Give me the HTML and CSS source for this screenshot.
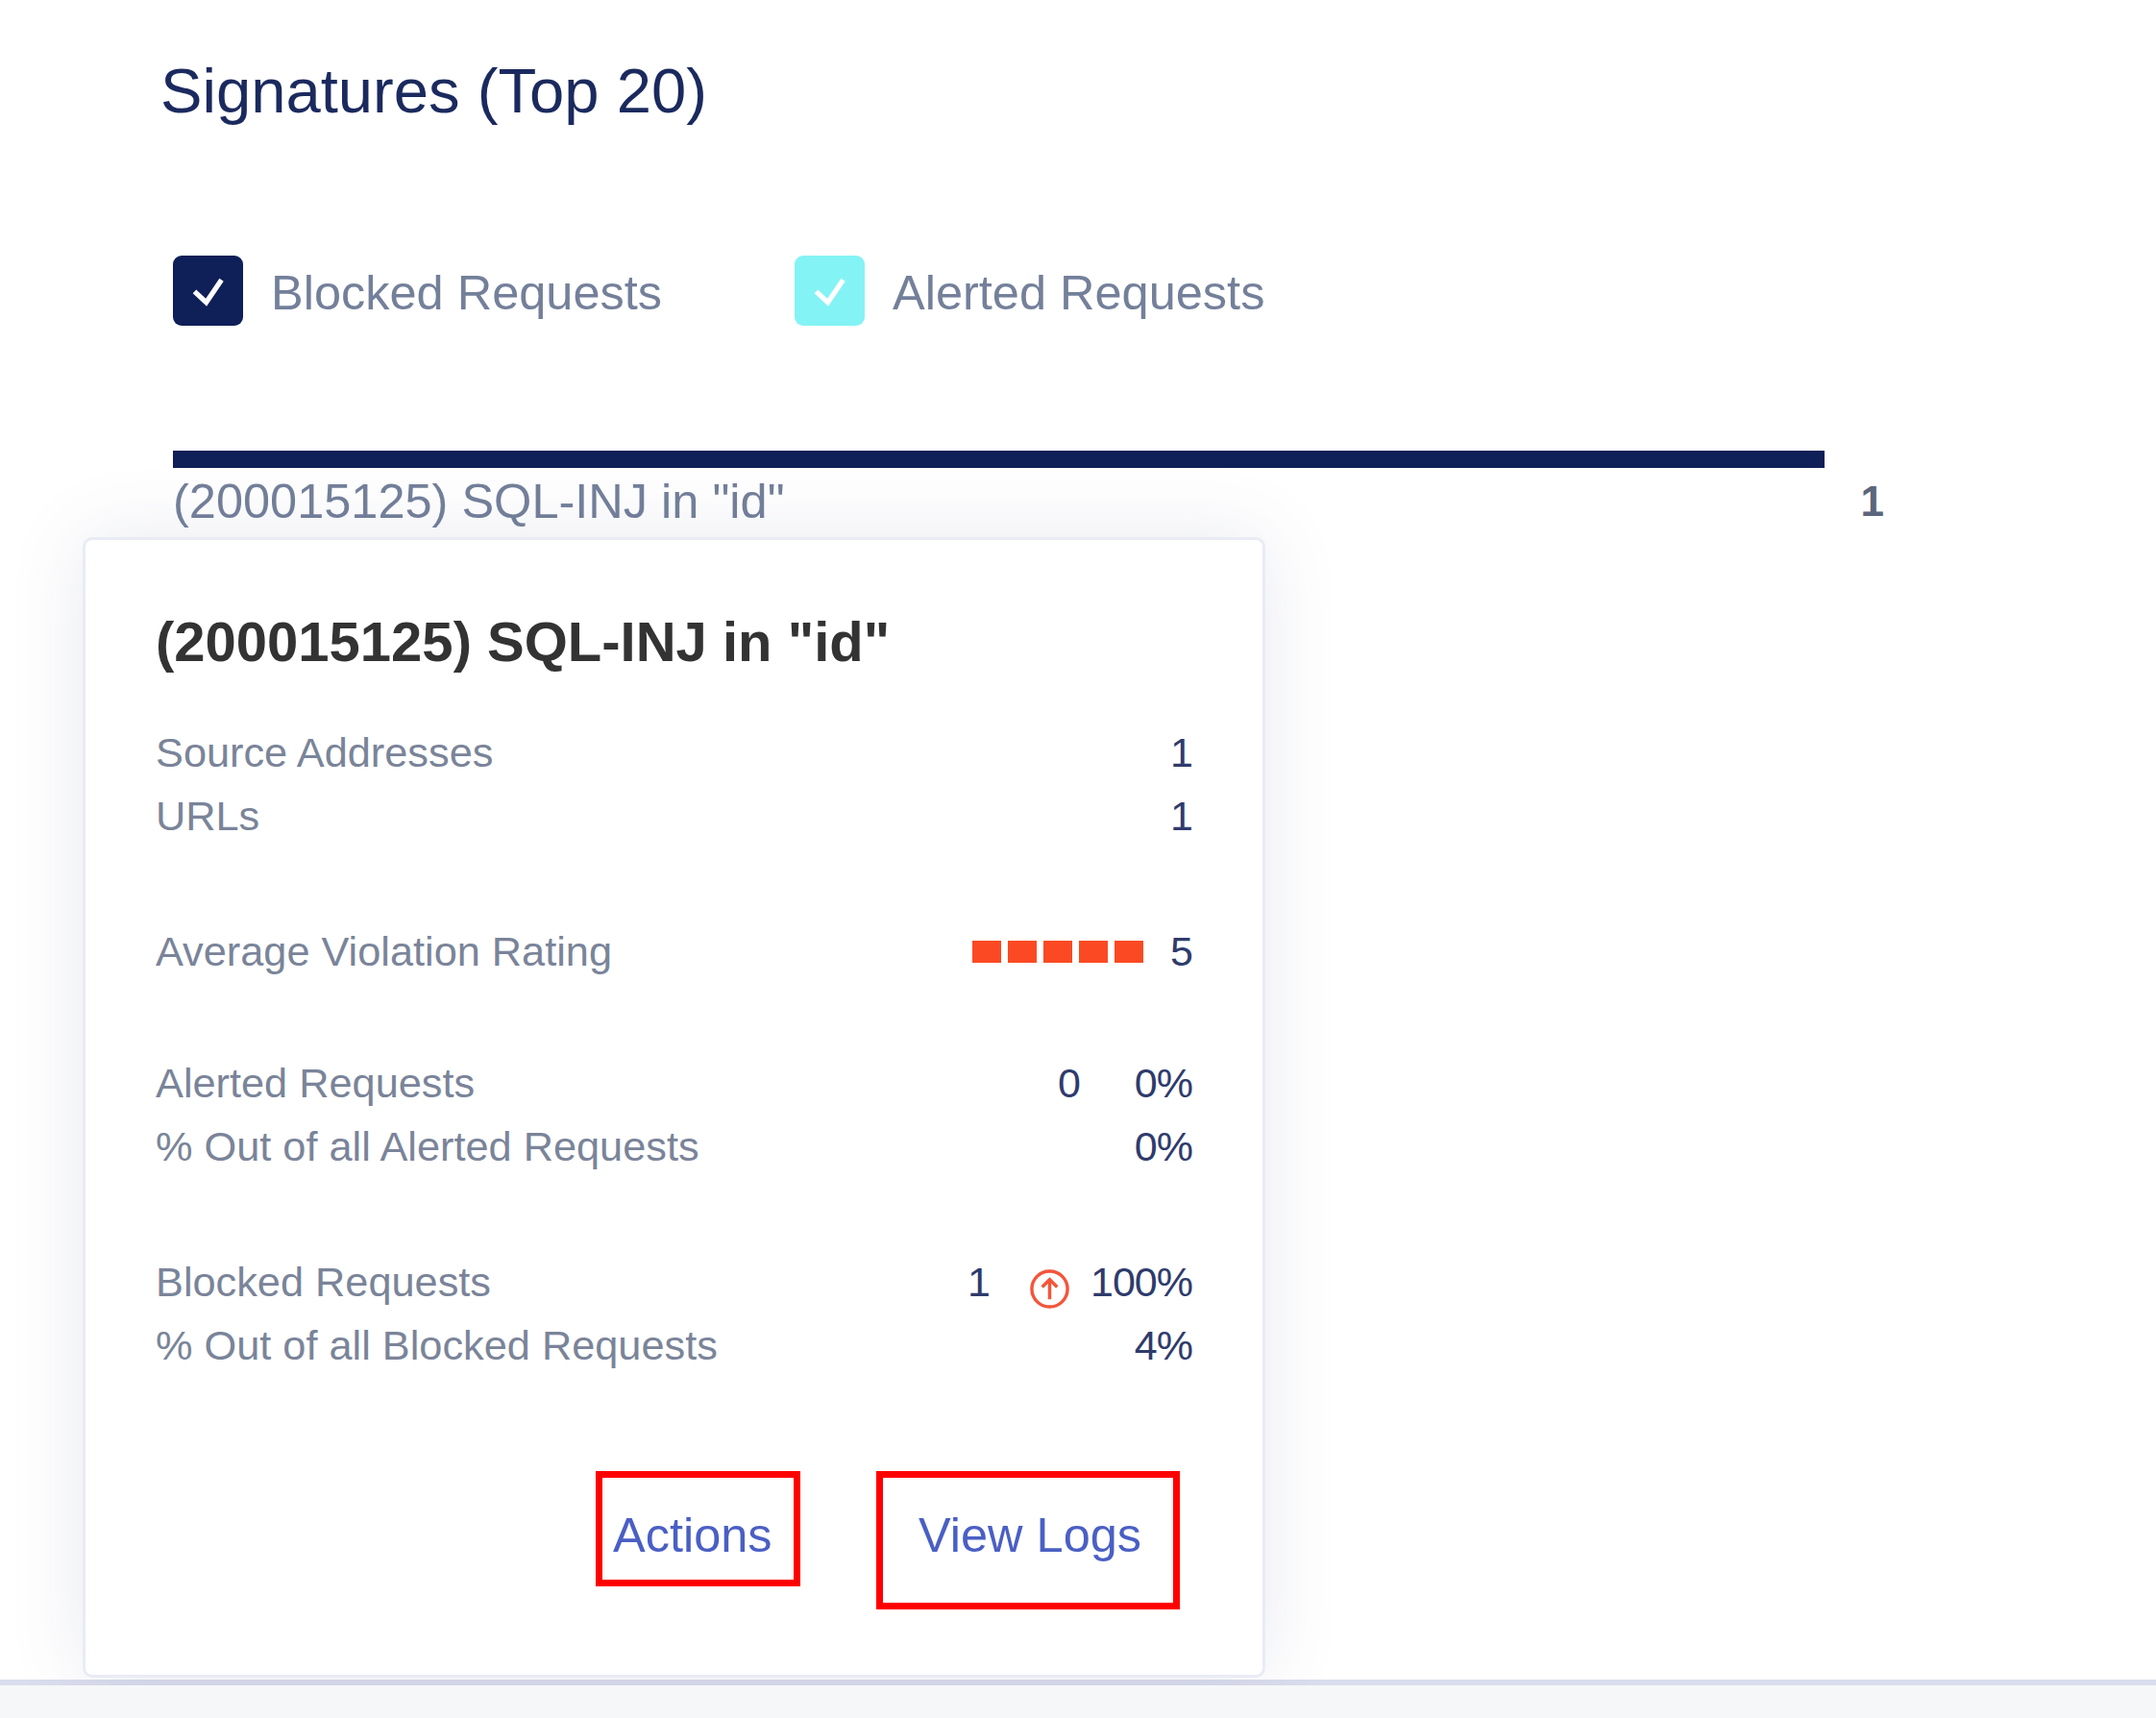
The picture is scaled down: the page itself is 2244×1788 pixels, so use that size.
FILE: index.html
```html
<!DOCTYPE html>
<html lang="en">
<head>
    <meta charset="UTF-8">
    <title>Signatures (Top 20)</title>
    <link rel="stylesheet" href="styles.css">
</head>
<body>
    <main class="panel">
        <h2 class="panel-title">Signatures (Top 20)</h2>

        <div class="legend">
            <label class="legend-item">
                <span class="check check-blocked">
                    <svg viewBox="0 0 24 24"><path d="M4.5 12.5l6.5 6 8.500-12.500"/></svg>
                </span>
                <span class="legend-text">Blocked Requests</span>
            </label>
            <label class="legend-item">
                <span class="check check-alerted">
                    <svg viewBox="0 0 24 24"><path d="M4.5 12.5l6.500 6 8.500-12.500"/></svg>
                </span>
                <span class="legend-text">Alerted Requests</span>
            </label>
        </div>

        <div class="chart">
            <div class="bar"></div>
            <div class="chart-row">
                <span class="chart-label">(200015125) SQL-INJ in "id"</span>
                <span class="chart-value">1</span>
            </div>
        </div>

        <!-- tooltip shown when hovering the bar -->
        <section class="tooltip">
            <h3 class="tooltip-title">(200015125) SQL-INJ in "id"</h3>

            <div class="group">
                <div class="row"><span class="label">Source Addresses</span><span class="value">1</span></div>
                <div class="row"><span class="label">URLs</span><span class="value">1</span></div>
            </div>

            <div class="group group-rating">
                <div class="row">
                    <span class="label">Average Violation Rating</span>
                    <span class="values">
                        <span class="rating"><i></i><i></i><i></i><i></i><i></i></span>
                        <span class="value">5</span>
                    </span>
                </div>
            </div>

            <div class="group">
                <div class="row">
                    <span class="label">Alerted Requests</span>
                    <span class="values">
                        <span class="value count-alerted">0</span>
                        <span class="value">0%</span>
                    </span>
                </div>
                <div class="row"><span class="label">% Out of all Alerted Requests</span><span class="value">0%</span></div>
            </div>

            <div class="group">
                <div class="row">
                    <span class="label">Blocked Requests</span>
                    <span class="values">
                        <span class="value count-blocked">1</span>
                        <svg class="trend" viewBox="0 0 44 44">
                            <circle cx="22" cy="22" r="19"/>
                            <path d="M22 33V13M14 20l8-8 8 8"/>
                        </svg>
                        <span class="value">100%</span>
                    </span>
                </div>
                <div class="row"><span class="label">% Out of all Blocked Requests</span><span class="value">4%</span></div>
            </div>

            <div class="actions">
                <a href="#" class="action action-short">Actions</a>
                <a href="#" class="action action-tall">View Logs</a>
            </div>
        </section>
    </main>
</body>
</html>
```

FILE: styles.css
```css
* {
    box-sizing: border-box;
}

body {
    margin: 0;
    background-color: #f6f7f9;
    font-family: "Liberation Sans", Arial, sans-serif;
}

.panel {
    position: relative;
    height: 1754px;
    padding: 54px 345px 0 180px;
    background-color: #fff;
    border-bottom: 6px solid #dadded;
}

.panel-title {
    margin: 0 0 0 -13px;
    font-size: 65.2px;
    font-weight: normal;
    line-height: 82px;
    color: #1b2a5e;
}

.legend {
    display: flex;
    margin-top: 130px;
}

.legend-item {
    display: flex;
    align-items: center;
    gap: 29px;
    width: 647px;
    font-size: 50.5px;
    color: #74809a;
}

.legend-text {
    margin-top: 3px;
}

.check {
    display: flex;
    width: 73px;
    height: 73px;
    padding: 14px;
    border-radius: 9px;
}

.check svg {
    fill: none;
    stroke: #fff;
    stroke-width: 2.8;
}

.check-blocked {
    background-color: #0f1f57;
}

.check-alerted {
    background-color: #84f3f5;
}

.chart {
    margin-top: 130px;
}

.bar {
    height: 18px;
    background-color: #0f1f57;
}

.chart-row {
    display: flex;
    justify-content: space-between;
    margin-right: -62px;
    font-size: 50.5px;
    line-height: 70px;
    color: #74809a;
}

.chart-value {
    font-size: 44px;
    font-weight: bold;
    color: #5c667c;
}

.tooltip {
    position: absolute;
    left: 86px;
    top: 559px;
    width: 1231px;
    height: 1187px;
    padding: 71px 73px 0;
    background-color: #fff;
    border: 3px solid #e9ebf5;
    border-radius: 10px;
    box-shadow: 0 0 80px rgba(70, 80, 130, 0.12);
}

.tooltip-title {
    margin: 0 0 47px;
    font-size: 58px;
    font-weight: bold;
    line-height: 70px;
    color: #333;
}

.group {
    margin-bottom: 75px;
}

.group-rating {
    margin-bottom: 71px;
}

.row {
    display: flex;
    justify-content: space-between;
    align-items: center;
    height: 66px;
    font-size: 43px;
}

.label {
    font-size: 43.3px;
    color: #7a8499;
}

.value {
    letter-spacing: -1px;
    color: #2f3b6c;
}

.values {
    display: flex;
    align-items: center;
}

.rating {
    display: flex;
    gap: 7px;
    margin-right: 28px;
}

.rating i {
    width: 30px;
    height: 23px;
    background-color: #fb4a23;
}

.count-alerted {
    margin-right: 57px;
}

.count-blocked {
    margin-right: 41px;
}

.trend {
    width: 43px;
    height: 43px;
    margin: 14px 21px 0 0;
    fill: none;
    stroke: #f4553a;
    stroke-width: 3.5;
}

.actions {
    position: absolute;
    left: 531px;
    top: 969px;
    display: flex;
    align-items: flex-start;
    gap: 79px;
}

.action {
    display: block;
    padding-top: 31px;
    border: 7px solid #f00;
    font-size: 50.5px;
    line-height: 58px;
    color: #4a5fc4;
    text-decoration: none;
}

.action-short {
    width: 213px;
    height: 120px;
    padding-left: 11px;
}

.action-tall {
    width: 316px;
    height: 144px;
    padding-left: 37px;
}
```
